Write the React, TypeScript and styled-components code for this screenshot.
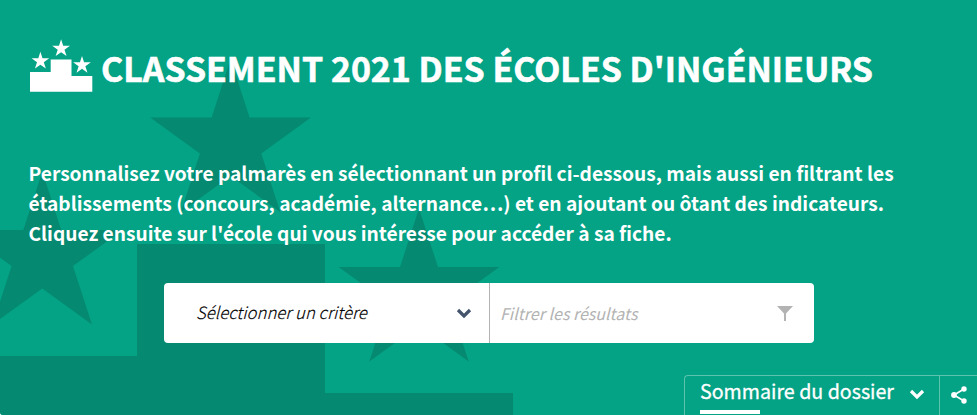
import React from 'react';
import styled, { createGlobalStyle } from 'styled-components';

const Global = createGlobalStyle`
  *, *::before, *::after { box-sizing: border-box; }
  html, body { margin: 0; background: #fff; overflow: hidden; }
  body, input, button { font-family: "Noto Sans CJK JP", "Noto Sans", sans-serif; }
`;

const Hero = styled.main`
  position: relative;
  width: 977px;
  height: 415px;
  overflow: hidden;
  display: flex;
  flex-direction: column;
  background: #04a386;
  color: #fff;
  border-bottom-left-radius: 3px;
`;

const Backdrop = styled.svg`
  position: absolute;
  inset: 0;
  width: 977px;
  height: 415px;
  fill: #058a71;
`;

const Header = styled.header`
  position: relative;
  display: flex;
  height: 60px;
  margin: 39px 0 0 29px;
`;

const Logo = styled.svg`
  flex: none;
  width: 64px;
  height: 54px;
  fill: #fff;
`;

const Title = styled.h1`
  margin: 0 0 0 8px;
  font-size: 33.9px;
  line-height: 58px;
  font-weight: 700;
  -webkit-text-stroke: 0.6px #fff;
  white-space: nowrap;
`;

const Intro = styled.p`
  position: relative;
  margin: 59px 0 0 28.5px;
  font-size: 19.16px;
  line-height: 30px;
  font-weight: 700;
  white-space: nowrap;
`;

const Line = styled.span`
  display: block;
  width: max-content;
`;

const Filters = styled.form`
  position: relative;
  display: flex;
  width: 650px;
  height: 60px;
  margin: 35px 0 0 164px;
  background: #fff;
  border-radius: 4px;
`;

const Select = styled.button`
  display: flex;
  align-items: center;
  justify-content: space-between;
  width: 326px;
  padding: 0 17px 0 32px;
  border: 0;
  border-right: 1px solid #b3b3b3;
  background: none;
  color: #000;
  font-size: 16.75px;
  line-height: 24px;
  font-weight: 300;
  font-style: italic;
  -webkit-text-stroke: 0.15px #000;

  span { margin-top: -2px; }
`;

const Search = styled.label`
  flex: 1;
  display: flex;
  align-items: center;
  justify-content: space-between;
  padding: 0 21px 0 10px;
  color: #b3b3b3;
  font-size: 16px;
  line-height: 24px;
  font-style: italic;
`;

const Footer = styled.nav`
  position: relative;
  display: flex;
  align-self: flex-end;
  width: 293px;
  height: 40px;
  margin-top: 32px;
  border: 1px solid #5cc3ae;
  border-width: 1px 0 0 1px;
  border-top-left-radius: 4px;
`;

const Summary = styled.div`
  display: flex;
  flex-direction: column;
  width: 255px;
  padding-left: 15px;
  border-right: 1px solid #5cc3ae;
`;

const SummaryRow = styled.div`
  display: flex;
  height: 34px;
  align-items: center;
  justify-content: space-between;
  padding-right: 14px;
  font-size: 19.65px;
  line-height: 30px;
  -webkit-text-stroke: 0.3px #fff;
  white-space: nowrap;

  span { margin-top: -4px; }
  svg { margin-top: 2px; }
`;

const Underline = styled.i`
  width: 60px;
  height: 4px;
  background: #fff;
`;

const Share = styled.svg`
  width: 18px;
  height: 20px;
  margin: 9px 0 0 10px;
`;

function star(cx: number, cy: number, r: number) {
  return Array.from({ length: 10 }, (_, i) => {
    const a = -Math.PI / 2 + (i * Math.PI) / 5;
    const k = i % 2 ? r * 0.382 : r;
    return `${(cx + k * Math.cos(a)).toFixed(2)},${(cy + k * Math.sin(a)).toFixed(2)}`;
  }).join(' ');
}

const Chevron = ({ color }: { color: string }) => (
  <svg width="16" height="12" viewBox="0 0 16 12" fill="none" stroke={color} strokeWidth="3.2">
    <path d="M2 3 8 9 14 3" />
  </svg>
);

export default function App() {
  return (
    <>
      <Global />
      <Hero>
        <Backdrop viewBox="0 0 977 415" aria-hidden>
          <polygon points={star(230.6, 143.6, 84.5)} />
          <polygon points={star(42.3, 256.1, 84.5)} />
          <polygon points={star(419, 293.1, 84.5)} />
          <path d="M0 356H137V244H325V393H513V415H0Z" />
        </Backdrop>
        <Header>
          <Logo viewBox="29 39 64 54" aria-hidden>
            <polygon points={star(61.1, 48.6, 9.3)} />
            <polygon points={star(40.4, 61.1, 9.3)} />
            <polygon points={star(82, 65.2, 9.3)} />
            <path d="M30 72H50.7V59.4H71.5V76H92.3V91.7H30Z" />
          </Logo>
          <Title>CLASSEMENT 2021 DES ÉCOLES D'INGÉNIEURS</Title>
        </Header>
        <Intro>
          <Line>Personnalisez votre palmarès en sélectionnant un profil ci-dessous, mais aussi en filtrant les</Line>
          <Line>établissements (concours, académie, alternance…) et en ajoutant ou ôtant des indicateurs.</Line>
          <Line>Cliquez ensuite sur l'école qui vous intéresse pour accéder à sa fiche.</Line>
        </Intro>
        <Filters>
          <Select type="button">
            <span>Sélectionner un critère</span>
            <Chevron color="#44546a" />
          </Select>
          <Search>
            <span>Filtrer les résultats</span>
            <svg width="16" height="16" viewBox="0 0 16 16" fill="#b3b3b3">
              <path d="M0 1H16L9 8.5V16H7V8.5Z" />
            </svg>
          </Search>
        </Filters>
        <Footer>
          <Summary>
            <SummaryRow>
              <span>Sommaire du dossier</span>
              <Chevron color="#fff" />
            </SummaryRow>
            <Underline />
          </Summary>
          <Share viewBox="0 0 18 20" fill="#fff">
            <path d="M14 4 4 10 14 16" fill="none" stroke="#fff" strokeWidth="1.7" />
            <circle cx="14" cy="4" r="2.7" />
            <circle cx="4" cy="10" r="2.9" />
            <circle cx="14" cy="16" r="2.7" />
          </Share>
        </Footer>
      </Hero>
    </>
  );
}
